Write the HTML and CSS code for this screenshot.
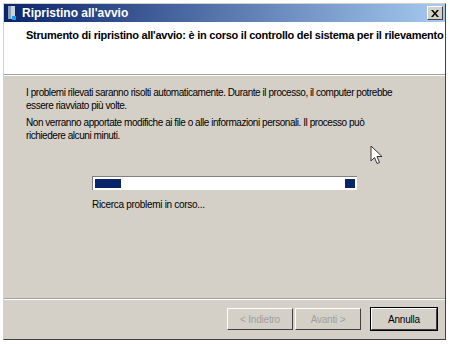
FILE: index.html
```html
<!DOCTYPE html>
<html lang="it">
<head>
  <meta charset="UTF-8" />
  <title>Ripristino all'avvio</title>
  <link rel="stylesheet" href="styles.css">
</head>
<body>
  <div class="finestra">
    <div class="titolo">
      <svg class="icona" width="10" height="14" viewBox="0 0 10 14">
        <rect x="1" y="0" width="7" height="13" fill="#c8d2dc"/>
        <rect x="1" y="0" width="3" height="13" fill="#8ea0b4"/>
        <rect x="5" y="10" width="4" height="4" fill="#1aa0e0"/>
      </svg>
      <span class="nome">Ripristino all'avvio</span>
      <div class="chiudi">
        <svg width="8" height="7" viewBox="0 0 8 7">
          <path d="M0 0h2l2 2.5L6 0h2L5 3.5 8 7H6L4 4.5 2 7H0l3-3.5z" fill="#000"/>
        </svg>
      </div>
    </div>

    <div class="intestazione">
      <h1>Strumento di ripristino all'avvio: è in corso il controllo del sistema per il rilevamento</h1>
    </div>

    <div class="corpo">
      <p>I problemi rilevati saranno risolti automaticamente. Durante il processo, il computer potrebbe essere riavviato più volte.</p>
      <p>Non verranno apportate modifiche ai file o alle informazioni personali. Il processo può richiedere alcuni minuti.</p>

      <div class="avanzamento">
        <div class="barra">
          <span class="blocco"></span>
          <span class="blocco"></span>
        </div>
        <div class="stato">Ricerca problemi in corso...</div>
      </div>

      <svg class="puntatore" width="14" height="20" viewBox="0 0 14 20">
        <path d="M1 1v15l3.5-3.5 2.5 6 2.5-1-2.5-6H12z" fill="#fff" stroke="#333" stroke-width="1"/>
      </svg>
    </div>

    <div class="piede">
      <button disabled>&lt; Indietro</button>
      <button disabled>Avanti &gt;</button>
      <button class="annulla">Annulla</button>
    </div>
  </div>
</body>
</html>
```

FILE: styles.css
```css
body {
  margin: 0;
  background: #fff;
  font-family: "Liberation Sans", Arial, sans-serif;
  font-size: 10px;
  letter-spacing: -0.45px;
  color: #000;
}
.finestra {
  margin: 3px 0 0 3px;
  width: 441px;
  height: 335px;
  border: 1px solid #d4d0c8;
  border-right-color: #404040;
  border-bottom-color: #404040;
  background: #d4d0c8;
  display: flex;
  flex-direction: column;
  overflow: hidden;
}
.titolo {
  height: 18px;
  background: linear-gradient(to right, #0a246a, #a6caf0);
  display: flex;
  align-items: center;
  padding: 0 2px 0 3px;
  color: #fff;
  font-weight: bold;
}
.icona {
  margin-right: 5px;
}
.nome {
  flex: 1;
  font-size: 12px;
  letter-spacing: 0;
}
.chiudi {
  width: 16px;
  height: 14px;
  box-sizing: border-box;
  background: #d4d0c8;
  border: 1px solid;
  border-color: #fff #404040 #404040 #fff;
  display: flex;
  align-items: center;
  justify-content: center;
}
.intestazione {
  height: 52px;
  background: #fff;
  padding: 0 0 0 22px;
  border-bottom: 1px solid #a0a0a0;
  box-shadow: 0 1px 0 #fff;
  overflow: hidden;
}
h1 {
  margin: 7px 0 0;
  font-size: 11px;
  font-weight: bold;
  letter-spacing: -0.25px;
  white-space: nowrap;
}
.corpo {
  flex: 1;
  padding: 11px 50px 0 22px;
  position: relative;
  border-bottom: 1px solid #a0a0a0;
  box-shadow: 0 1px 0 #fff;
}
.corpo p {
  margin: 0 0 4px;
  line-height: 13px;
}
.corpo p + p {
  margin-top: 4px;
}
.avanzamento {
  margin: 34px 0 0 66px;
  width: 265px;
}
.barra {
  height: 14px;
  box-sizing: border-box;
  background: #fff;
  border-top: 1px solid #808080;
  border-left: 1px solid #808080;
  display: flex;
  justify-content: space-between;
  padding: 2px;
}
.blocco {
  background: #0a246a;
  width: 10px;
}
.blocco:first-child {
  width: 26px;
}
.stato {
  margin-top: 9px;
  letter-spacing: -0.3px;
}
.puntatore {
  position: absolute;
  left: 366px;
  top: 70px;
}
.piede {
  height: 40px;
  display: flex;
  justify-content: flex-end;
  align-items: center;
  padding-right: 8px;
  gap: 2px;
}
button {
  width: 66px;
  height: 22px;
  font-family: "Liberation Sans", Arial, sans-serif;
  font-size: 10px;
  letter-spacing: -0.2px;
  background: #d4d0c8;
  border: 1px solid;
  border-color: #fff #404040 #404040 #fff;
  color: #000;
  padding: 0;
}
button:disabled {
  color: #a0a0a0;
}
.annulla {
  margin-left: 8px;
  outline: 1px solid #000;
  outline-offset: 0;
}
```
